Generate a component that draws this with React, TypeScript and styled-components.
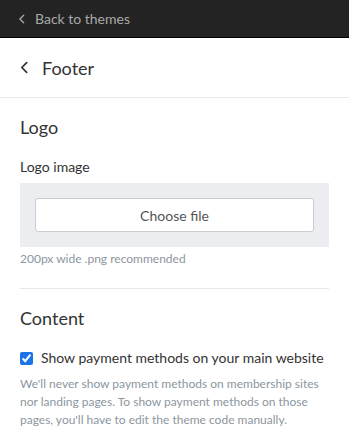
import { createGlobalStyle, styled } from "styled-components";

const GlobalStyle = createGlobalStyle`
    body {
        margin: 0;
        background: #fff;
        font-family: "Lato", "Open Sans", sans-serif;
        color: #333;
    }
`;

const Page = styled.div`
    width: 349px;
    min-height: 439px;
    background: #fff;
`;

const TopBar = styled.div`
    height: 37px;
    background: #232323;
    border-bottom: 1px solid #000;
    display: flex;
    align-items: center;
    gap: 8px;
    padding-left: 17px;
    color: #a9a9a9;
    font-size: 14px;
`;

const Header = styled.div`
    height: 59px;
    display: flex;
    align-items: center;
    gap: 11px;
    padding-left: 18px;
    border-bottom: 1px solid #e8e8e8;
    font-size: 18px;
    color: #333;
`;

const Body = styled.div`
    padding: 0 20px;
`;

const Section = styled.section<{ $border?: boolean }>`
    padding: 18px 0 ${(p) => (p.$border ? "20px" : "0")};
    border-bottom: ${(p) => (p.$border ? "1px solid #e8e8e8" : "none")};
`;

const SectionTitle = styled.h2`
    margin: 0 0 20px;
    font-size: 18px;
    font-weight: 400;
    line-height: 22px;
    color: #333;
`;

const FieldLabel = styled.div`
    font-size: 14px;
    line-height: 18px;
    color: #333;
    margin-bottom: 7px;
`;

const DropZone = styled.div`
    background: #ebedf1;
    padding: 15px;
`;

const FileButton = styled.button`
    width: 279px;
    height: 34px;
    display: block;
    background: #fff;
    border: 1px solid #c9cdd3;
    border-radius: 3px;
    font-family: inherit;
    font-size: 14px;
    color: #555;
    cursor: pointer;
`;

const Hint = styled.p<{ $gap?: number }>`
    margin: ${(p) => p.$gap ?? 0}px 0 0;
    font-size: 12px;
    line-height: 18px;
    color: #8c96a0;
`;

const CheckRow = styled.label`
    display: flex;
    align-items: center;
    gap: 8px;
    font-size: 14px;
    line-height: 18px;
    color: #333;
    margin-bottom: 8px;
`;

const Check = styled.input`
    width: 13px;
    height: 13px;
    margin: 0;
    accent-color: #1a73e8;
`;

const Chevron = ({ size, color }: { size: number; color: string }) => (
    <svg width={size} height={size} viewBox="0 0 12 12" fill="none">
        <path d="M8 1.5L3.5 6L8 10.5" stroke={color} strokeWidth="1.6" strokeLinecap="round" strokeLinejoin="round" />
    </svg>
);

export default function App() {
    return (
        <Page>
            <GlobalStyle />
            <TopBar>
                <Chevron size={10} color="#a9a9a9" />
                Back to themes
            </TopBar>
            <Header>
                <Chevron size={13} color="#333" />
                Footer
            </Header>
            <Body>
                <Section $border>
                    <SectionTitle>Logo</SectionTitle>
                    <FieldLabel>Logo image</FieldLabel>
                    <DropZone>
                        <FileButton type="button">Choose file</FileButton>
                    </DropZone>
                    <Hint $gap={3}>200px wide .png recommended</Hint>
                </Section>
                <Section>
                    <SectionTitle>Content</SectionTitle>
                    <CheckRow>
                        <Check type="checkbox" defaultChecked />
                        Show payment methods on your main website
                    </CheckRow>
                    <Hint>
                        We'll never show payment methods on membership sites nor landing pages. To show
                        payment methods on those pages, you'll have to edit the theme code manually.
                    </Hint>
                </Section>
            </Body>
        </Page>
    );
}
